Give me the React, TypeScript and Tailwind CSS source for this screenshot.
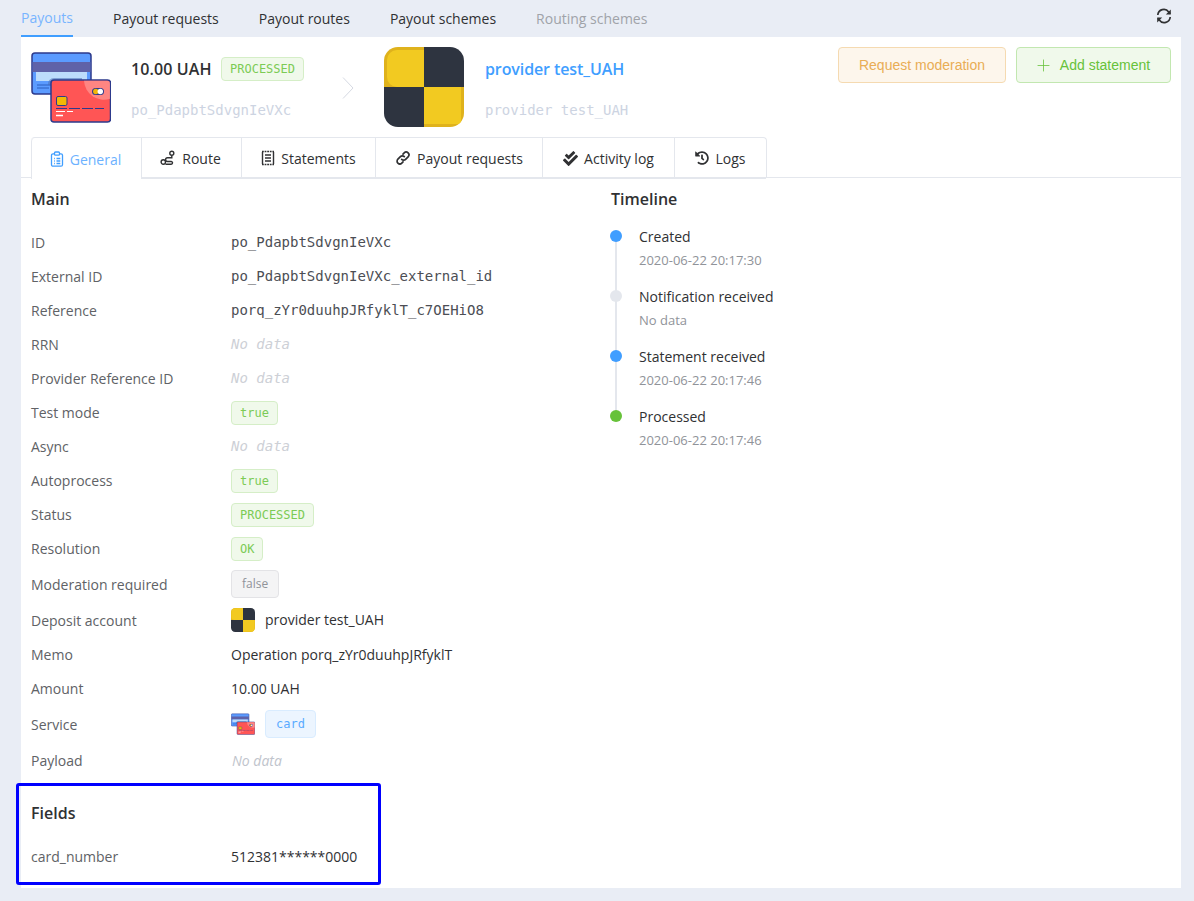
import { Plus } from "lucide-react";
import { FaCheckDouble, FaHistory } from "react-icons/fa";

const sans = "font-['Open_Sans','Noto_Sans',sans-serif]";
const mono = "font-['DejaVu_Sans_Mono','Liberation_Mono',monospace]";

function CardsIcon({ size = 80 }: { size?: number }) {
  return (
    <svg width={size} height={size} viewBox="0 0 80 80" className="shrink-0">
      <rect x="1" y="6" width="59" height="41" rx="3" fill="#5b9bff" stroke="#2d3a8c" strokeWidth="1.500" />
      <rect x="1.500" y="15" width="58" height="10" fill="#5f62a8" />
      <rect x="5" y="25" width="51" height="9" fill="#bcdcfb" />
      <path d="M6 38h16M6 41h12" stroke="#2d5fc0" strokeWidth="1" />
      <path d="M17 38a6 6 0 0 1 6-7h28v7z" fill="#4a6fb5" opacity="0.55" />
      <rect x="20" y="33" width="59.500" height="42" rx="3" fill="#ff5555" stroke="#2d3a8c" strokeWidth="1.500" />
      <path d="M53 33.800h23a3 3 0 0 1 3 3v15a20 20 0 0 1-26-18z" fill="#ff9a95" opacity="0.7" />
      <rect x="61" y="41" width="12" height="7" rx="3.500" fill="#2d3a8c" />
      <circle cx="64.800" cy="44.500" r="2.700" fill="#f2b705" />
      <circle cx="69.300" cy="44.500" r="2.700" fill="#fff" />
      <rect x="25.500" y="49.500" width="10.500" height="9" rx="1.500" fill="#f2b705" stroke="#2d3a8c" />
      <path d="M25 61.500h48" stroke="#2d3a8c" strokeWidth="1" strokeDasharray="11 2" />
      <path d="M25 64.500h9M36 64.500h6" stroke="#fff" strokeWidth="1" />
      <path d="M25 68.500h7" stroke="#fff" strokeWidth="1.500" />
    </svg>
  );
}

function ProviderIcon({ size = 80 }: { size?: number }) {
  const inset = size >= 60 ? 3 : 1;
  return (
    <svg width={size} height={size} viewBox="0 0 80 80" className="shrink-0">
      <defs>
        <clipPath id={`pc${size}`}>
          <rect width="80" height="80" rx="14" />
        </clipPath>
      </defs>
      <g clipPath={`url(#pc${size})`}>
        <rect width="40" height="40" fill="#dfb21c" />
        <rect x={inset} y={inset} width={40 - inset} height={40 - inset} rx="10" fill="#f2ca21" />
        <rect x={inset + 20} y={inset} width={20 - inset} height={40 - inset} fill="#f2ca21" />
        <rect x="40" width="40" height="40" fill="#2e3440" />
        <rect y="40" width="40" height="40" fill="#2e3440" />
        <rect x="40" y="40" width="40" height="40" fill="#dfb21c" />
        <rect x="40" y="40" width={40 - inset} height={40 - inset} rx="0" fill="#f2ca21" />
      </g>
    </svg>
  );
}

function Tag({ children, tone = "green", h = "h-6", font = mono, px = "px-2" }: { children: string; tone?: "green" | "gray" | "blue"; h?: string; font?: string; px?: string }) {
  const tones = {
    green: "bg-[#f0f9eb] border-[#d5eec7] text-[#7ccb55]",
    gray: "bg-[#f4f4f5] border-[#e3e3e6] text-[#909399]",
    blue: "bg-[#ecf5ff] border-[#d9ecff] text-[#5aabff]",
  };
  return (
    <span className={`inline-flex items-center rounded-[4px] border text-xs ${h} ${px} ${font} ${tones[tone]}`}>{children}</span>
  );
}

function Row({ label, tall, children }: { label: string; tall?: boolean; children: React.ReactNode }) {
  return (
    <div className={`flex items-center ${tall ? "h-9" : "h-[34px]"}`}>
      <div className={`w-[200px] shrink-0 text-[#606266] ${tall ? "pt-0.5" : ""}`}>{label}</div>
      <div className="flex items-center text-[#303133]">{children}</div>
    </div>
  );
}

const NoData = () => <span className={`${mono} pb-0.5 text-sm italic text-[#cdd0d6]`}>No data</span>;
const Mono = ({ children }: { children: string }) => <span className={`${mono} pb-0.5 text-sm text-[#4c4e54]`}>{children}</span>;

const IconClipboard = () => (
  <svg width="14" height="16" viewBox="0 0 14 16" fill="none" stroke="#409eff" strokeWidth="1.300">
    <rect x="1.500" y="2.800" width="11" height="12.400" rx="1.500" />
    <rect x="4.500" y="1" width="5" height="3.200" rx="1" fill="#fff" />
    <path d="M4 7.500h.8M6.500 7.500h3.800M4 10h.8M6.500 10h3.800M4 12.500h.8M6.500 12.500h3.800" />
  </svg>
);
const IconRoute = () => (
  <svg width="16" height="16" viewBox="0 0 16 16" fill="none" stroke="#303133" strokeWidth="1.400">
    <circle cx="11.800" cy="3.200" r="2" />
    <circle cx="3.300" cy="12" r="2.200" />
    <path d="M11.800 5.500v2.200H7.500a1.900 1.900 0 0 0 0 3.800h3.700a1.300 1.300 0 0 1 0 2.700H5.500" />
  </svg>
);
const IconStatement = () => (
  <svg width="14" height="16" viewBox="0 0 14 16" fill="none" stroke="#303133" strokeWidth="1.400">
    <path d="M1.500 2v12" />
    <path d="M12.500 2v12" />
    <path d="M1 1.500h12M1 14.500h12" strokeDasharray="1.800 0.800" strokeWidth="1.500" />
    <path d="M4 5h6M4 8h6M4 11h6" strokeWidth="1.500" />
  </svg>
);
const IconLink = () => (
  <svg width="16" height="16" viewBox="0 0 16 16" fill="none" stroke="#303133" strokeWidth="1.700" strokeLinecap="round">
    <path d="M6.700 9.300a2.700 2.700 0 0 0 3.900 0l2.500-2.500a2.750 2.750 0 0 0-3.900-3.900L8 4.100" />
    <path d="M9.300 6.700a2.700 2.700 0 0 0-3.900 0L2.900 9.200a2.750 2.750 0 0 0 3.900 3.900L8 11.900" />
  </svg>
);
const IconRefresh = () => (
  <svg width="16" height="16" viewBox="0 0 16 16" fill="none" stroke="#303133" strokeWidth="1.700">
    <path d="M1.800 7A6 6 0 0 1 12.700 4L14.200 5.800" />
    <path d="M14.800 1.500v5h-5z" fill="#303133" stroke="none" />
    <path d="M14.200 9A6 6 0 0 1 3.300 12L1.800 10.200" />
    <path d="M1.200 14.500v-5h5z" fill="#303133" stroke="none" />
  </svg>
);

const tabs = [
  { name: "General", w: "w-[110px] pr-[2px]", icon: <IconClipboard /> },
  { name: "Route", w: "w-[100px] pr-[2px]", icon: <IconRoute /> },
  { name: "Statements", w: "w-[134px]", icon: <IconStatement /> },
  { name: "Payout requests", w: "w-[167px]", icon: <IconLink /> },
  { name: "Activity log", w: "w-[132px]", icon: <FaCheckDouble size={15} color="#303133" /> },
  { name: "Logs", w: "w-[92px]", icon: <FaHistory size={14} color="#303133" /> },
];

const timeline = [
  { t: "Created", d: "2020-06-22 20:17:30", c: "bg-[#409eff]" },
  { t: "Notification received", d: "No data", c: "bg-[#e4e7ed]" },
  { t: "Statement received", d: "2020-06-22 20:17:46", c: "bg-[#409eff]" },
  { t: "Processed", d: "2020-06-22 20:17:46", c: "bg-[#67c23a]" },
];

export default function App() {
  return (
    <div className={`relative h-[901px] w-[1194px] overflow-hidden bg-[#e9edf5] text-sm ${sans}`}>
      <div className="flex h-[37px] items-stretch pl-[21px] pr-[22px]">
        <div className="flex h-[37px] w-[52px] items-center justify-center border-b-2 border-[#409eff] text-[#79b5ff]">Payouts</div>
        <div className="ml-10 flex items-center text-[#303133]">Payout requests</div>
        <div className="ml-10 flex items-center text-[#303133]">Payout routes</div>
        <div className="ml-10 flex items-center text-[#303133]">Payout schemes</div>
        <div className="ml-10 flex items-center text-[#a0a3a9]">Routing schemes</div>
        <div className="ml-auto flex items-center pb-[5px]"><IconRefresh /></div>
      </div>

      <div className="ml-[21px] h-[851px] w-[1160px] bg-white">
        <div className="flex h-[100px] px-[10px] pt-[10px]">
          <CardsIcon />
          <div className="ml-5 w-[211px]">
            <div className="mt-[10px] flex h-6 items-center">
              <span className="w-[90px] shrink-0 text-base font-semibold tracking-[0.1px] text-[#303133]">10.00 UAH</span>
              <Tag>PROCESSED</Tag>
            </div>
            <div className={`mt-[19px] text-[14px] text-[#cdd4e2] ${mono}`}>po_PdapbtSdvgnIeVXc</div>
          </div>
          <svg width="12" height="22" viewBox="0 0 12 22" fill="none" stroke="#d5d9e2" className="mt-[30px] shrink-0">
            <path d="M1 0.500l10 10.500-10 10.500" />
          </svg>
          <div className="ml-[30px]"><ProviderIcon /></div>
          <div className="ml-[21px] flex-1">
            <div className="mt-[10px] flex h-6 items-center text-base font-semibold tracking-[-0.1px] text-[#409eff]">provider test_UAH</div>
            <div className={`mt-[19px] text-[14px] text-[#cdd4e2] ${mono}`}>provider test_UAH</div>
          </div>
          <div className="flex gap-[10px] font-['Liberation_Sans',sans-serif]">
            <button className="h-9 w-[168px] rounded-[4px] border border-[#f5dab1] bg-[#fdf6ec] text-[#e9ad55]">Request moderation</button>
            <button className="flex h-9 w-[155px] items-center justify-center gap-[7px] rounded-[4px] border border-[#c2e7b0] bg-[#f0f9eb] pr-[3px] text-[#67c23a]">
              <Plus size={19} strokeWidth={1} />
              Add statement
            </button>
          </div>
        </div>

        <div className="flex h-[41px] border-b border-[#e4e7ed] pl-[10px]">
          <div className="flex h-[41px] rounded-t-[4px] border-t border-r border-[#e4e7ed]">
            {tabs.map((t, i) => (
              <div
                key={t.name}
                className={`flex h-[41px] items-center justify-center gap-[6px] ${t.w} ${i === 0 ? "rounded-tl-[4px] border-l border-[#e4e7ed] bg-white text-[#6cb2ff]" : "border-l border-b border-[#e4e7ed] text-[#303133]"}`}
              >
                {t.icon}
                <span className="pt-0.5">{t.name}</span>
              </div>
            ))}
          </div>
        </div>

        <div className="flex px-[10px]">
          <div className="w-[580px]">
            <h2 className="flex h-[48px] items-center pb-[6px] text-base font-semibold text-[#303133]">Main</h2>
            <Row label="ID"><Mono>po_PdapbtSdvgnIeVXc</Mono></Row>
            <Row label="External ID"><Mono>po_PdapbtSdvgnIeVXc_external_id</Mono></Row>
            <Row label="Reference"><Mono>porq_zYr0duuhpJRfyklT_c7OEHiO8</Mono></Row>
            <Row label="RRN"><NoData /></Row>
            <Row label="Provider Reference ID"><NoData /></Row>
            <Row label="Test mode"><Tag>true</Tag></Row>
            <Row label="Async"><NoData /></Row>
            <Row label="Autoprocess"><Tag>true</Tag></Row>
            <Row label="Status"><Tag>PROCESSED</Tag></Row>
            <Row label="Resolution"><Tag>OK</Tag></Row>
            <Row label="Moderation required" tall><Tag tone="gray" h="h-7" font={sans} px="px-[10px]">false</Tag></Row>
            <Row label="Deposit account" tall>
              <ProviderIcon size={24} />
              <span className="ml-[10px]">provider test_UAH</span>
            </Row>
            <Row label="Memo">Operation porq_zYr0duuhpJRfyklT</Row>
            <Row label="Amount">10.00 UAH</Row>
            <Row label="Service" tall>
              <CardsIcon size={24} />
              <span className="ml-[10px]"><Tag tone="blue" h="h-7" px="px-[10px]">card</Tag></span>
            </Row>
            <Row label="Payload" tall><span className="pl-px pt-0.5 italic text-[#c0c4cc]">No data</span></Row>

            <h2 className="mt-[14px] flex h-[48px] items-center pb-[6px] text-base font-semibold text-[#303133]">Fields</h2>
            <Row label="card_number">512381******0000</Row>
          </div>

          <div className="w-[560px]">
            <h2 className="flex h-[48px] items-center pb-[6px] text-base font-semibold text-[#303133]">Timeline</h2>
            <ul className="mt-px">
              {timeline.map((e, i) => (
                <li key={e.t} className="relative h-[60px] pl-7">
                  {i < timeline.length - 1 && <span className="absolute left-[4px] top-[9px] h-[60px] w-[2px] bg-[#e4e7ed]" />}
                  <span className={`absolute left-0 top-[3px] h-3 w-3 -translate-x-px rounded-full ${e.c}`} />
                  <div className="text-[#303133]">{e.t}</div>
                  <div className="mt-[4px] text-[13px] text-[#909399]">{e.d}</div>
                </li>
              ))}
            </ul>
          </div>
        </div>
      </div>

      <div className="absolute left-4 top-[783px] h-[102px] w-[365px] rounded-[3px] border-[3px] border-[#0000ff]" />
    </div>
  );
}
